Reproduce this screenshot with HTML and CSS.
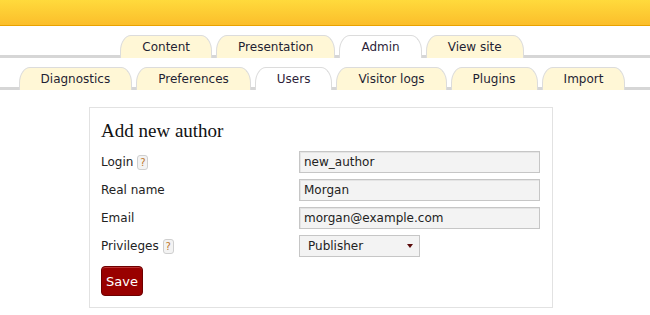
FILE: index.html
```html
<!DOCTYPE html>
<html lang="en">
<head>
    <meta charset="UTF-8">
    <title>Users</title>
    <link rel="stylesheet" href="styles.css">
</head>
<body>
<!-- 顶部条 -->
<div class="header"></div>

<!-- 主菜单 -->
<div class="tabs main">
    <a class="tab" href="#">Content</a>
    <a class="tab" href="#">Presentation</a>
    <a class="tab active" href="#">Admin</a>
    <a class="tab" href="#">View site</a>
</div>

<!-- 子菜单 -->
<div class="tabs sub">
    <a class="tab" href="#">Diagnostics</a>
    <a class="tab" href="#">Preferences</a>
    <a class="tab active" href="#">Users</a>
    <a class="tab" href="#">Visitor logs</a>
    <a class="tab" href="#">Plugins</a>
    <a class="tab" href="#">Import</a>
</div>

<!-- 表单 -->
<div class="box">
    <h2>Add new author</h2>
    <div class="fields">
        <label>Login <span class="help">?</span></label>
        <input type="text" value="new_author">

        <label>Real name</label>
        <input type="text" value="Morgan">

        <label>Email</label>
        <input type="text" value="morgan@example.com">

        <label>Privileges <span class="help">?</span></label>
        <div class="select">
            <select>
                <option>Publisher</option>
                <option>Managing Editor</option>
                <option>Copy Editor</option>
            </select>
        </div>
    </div>
    <input class="save" type="button" value="Save">
</div>
</body>
</html>
```

FILE: styles.css
```css
body {
    margin: 0;
    padding: 0;
    background-color: #FFF;
    font-family: "DejaVu Sans", Verdana, sans-serif;
    font-size: 12px;
    color: #222;
}

.header {
    height: 25px;
    background: linear-gradient(#FFDA3C, #FBBE2B);
    border-bottom: 1px solid #E9A200;
}

.tabs {
    display: flex;
    justify-content: center;
    gap: 4px;
    padding-right: 6px;
    border-bottom: 3px solid #D6D6D6;
}
.main {
    margin-top: 9px;
}
.sub {
    margin-top: 9px;
}

.tab {
    display: block;
    height: 23px;
    line-height: 22px;
    margin-bottom: -3px;
    padding: 0 21px;
    box-sizing: border-box;
    background-color: #FFF7D6;
    border: 1px solid #DCDCDC;
    border-bottom: none;
    border-radius: 11px 11px 0 0 / 16px 16px 0 0;
    color: #1F1F33;
    text-decoration: none;
    text-align: center;
}
.tab.active {
    background-color: #FFF;
    color: #2E1F3A;
}

.box {
    width: 464px;
    margin: 17px 0 0 89px;
    padding: 11px 12px 11px 11px;
    box-sizing: border-box;
    border: 1px solid #E2E2E2;
}

.box h2 {
    margin: 0 0 8px 0;
    font-family: "Liberation Serif", Georgia, serif;
    font-size: 19px;
    font-weight: normal;
    line-height: 24px;
    color: #111;
}

.fields {
    display: grid;
    grid-template-columns: 198px 241px;
    row-gap: 6px;
    align-items: center;
}

.fields label {
    display: flex;
    align-items: center;
    gap: 4px;
}

.help {
    display: inline-block;
    width: 9px;
    height: 13px;
    line-height: 13px;
    border: 1px solid #CFCFCF;
    border-radius: 3px;
    background-color: #F3F3F3;
    color: #C0772C;
    font-size: 10px;
    text-align: center;
}

.fields input {
    display: block;
    width: 241px;
    height: 22px;
    padding: 0 4px;
    box-sizing: border-box;
    border: 1px solid #C6C6C6;
    box-shadow: inset 1px 1px 0 #E4E4E4;
    background-color: #F3F3F3;
    font-family: "DejaVu Sans", Verdana, sans-serif;
    font-size: 12px;
    color: #222;
    outline: none;
}

.select {
    position: relative;
    width: 121px;
}
.select select {
    display: block;
    width: 121px;
    height: 22px;
    padding: 0 6px 0 8px;
    box-sizing: border-box;
    border: 1px solid #C6C6C6;
    border-radius: 0;
    background-color: #F3F3F3;
    font-family: "DejaVu Sans", Verdana, sans-serif;
    font-size: 12px;
    color: #222;
    -webkit-appearance: none;
    appearance: none;
    outline: none;
}
.select:after {
    content: "";
    position: absolute;
    right: 7px;
    top: 9px;
    border-left: 3px solid transparent;
    border-right: 3px solid transparent;
    border-top: 4px solid #5A0A0A;
}

.save {
    display: block;
    width: 42px;
    height: 30px;
    margin-top: 9px;
    padding: 0;
    border: 1px solid #6E0000;
    border-radius: 4px;
    box-shadow: inset 0 1px 0 #B33;
    background-color: #990000;
    color: #FFF;
    font-family: "DejaVu Sans", Verdana, sans-serif;
    font-size: 13px;
}
```
